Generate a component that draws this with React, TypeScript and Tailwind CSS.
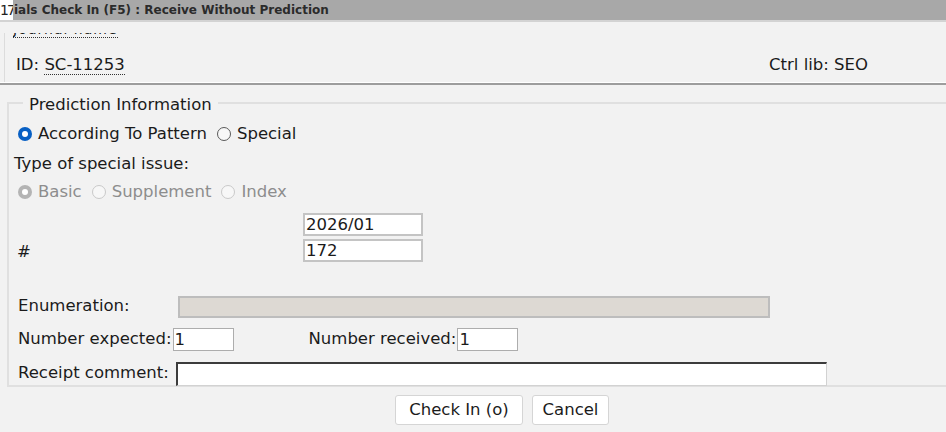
const Radio = ({ checked, disabled }: { checked?: boolean; disabled?: boolean }) => {
  if (checked) {
    return (
      <span
        className={
          'flex h-[14px] w-[14px] shrink-0 items-center justify-center rounded-full ' +
          (disabled ? 'bg-[#b4b4b4]' : 'bg-[#0860c4]')
        }
      >
        <span className="h-[6px] w-[6px] rounded-full bg-white" />
      </span>
    )
  }
  return (
    <span
      className={
        'h-[14px] w-[14px] shrink-0 rounded-full border bg-[#f7f7f7] ' +
        (disabled ? 'border-[#c9c9c9]' : 'border-[#5a5a5a]')
      }
    />
  )
}

const Option = ({ label, checked, disabled }: { label: string; checked?: boolean; disabled?: boolean }) => (
  <label className={'flex items-center gap-[6px] ' + (disabled ? 'text-[#8d8d8d]' : 'text-[#1b1b1b]')}>
    <Radio checked={checked} disabled={disabled} />
    <span>{label}</span>
  </label>
)

const App = () => {
  return (
    <div className="h-[432px] w-[946px] overflow-hidden bg-[#f2f2f2] text-[16.5px] leading-none text-[#1b1b1b] [font-family:'DejaVu_Sans',sans-serif]">
      {/* title bar */}
      <div className="flex h-[22px] items-center border-b-2 border-[#d3d3d3] bg-[#a8a8a8]">
        <span className="h-[20px] w-[13px] shrink-0 overflow-hidden bg-white text-[14px] leading-[21px] tracking-[-2px] text-[#222]">
          17
        </span>
        <span className="pl-[1px] text-[12px] font-bold text-[#2b2b2b]">
          ials Check In (F5) : Receive Without Prediction
        </span>
      </div>

      {/* record header */}
      <div className="pl-[4px] pt-[11px]">
        <div className="flex h-[49px] flex-col border-l border-[#dcdcdc]">
          <div className="ml-[8px] h-[5px] shrink-0 overflow-hidden">
            <span className="-mt-[12px] block w-fit border-b border-dotted border-[#333] text-[14px] leading-[16px] tracking-[1px]">
              Journal name
            </span>
          </div>
          <div className="mt-[19px] flex items-center pl-[11px] pr-[78px]">
            <span>
              ID: <span className="border-b border-dotted border-[#333]">SC-11253</span>
            </span>
            <span className="ml-auto">Ctrl lib: SEO</span>
          </div>
        </div>
      </div>
      <div className="border-t border-white" />
      <div className="border-t-2 border-[#9d9d9d]" />

      {/* prediction fieldset */}
      <fieldset className="ml-[7px] mt-[5px] h-[297px] w-[960px] border-2 border-[#e0e0e0] pl-[8px]">
        <legend className="ml-[6px] px-[6px] pt-[5px] leading-[20px]">Prediction Information</legend>
        <div className="mt-[11px] flex items-center gap-[10px] pl-[1px]">
          <Option label="According To Pattern" checked />
          <Option label="Special" />
        </div>
        <div className="mt-[13px] -ml-[3px]">Type of special issue:</div>
        <div className="mt-[12px] flex items-center gap-[10px] pl-[1px]">
          <Option label="Basic" checked disabled />
          <Option label="Supplement" disabled />
          <Option label="Index" disabled />
        </div>

        <div className="mt-[12px] flex items-end">
          <span className="mb-[1px] w-[286px]">#</span>
          <div className="flex flex-col gap-[3px]">
            <input
              readOnly
              value="2026/01"
              className="h-[23px] w-[120px] border-2 border-[#c4c4c4] bg-white px-[1px] text-[16.5px] outline-none"
            />
            <input
              readOnly
              value="172"
              className="h-[23px] w-[120px] border-2 border-[#c4c4c4] bg-white px-[1px] text-[16.5px] outline-none"
            />
          </div>
        </div>

        <div className="mt-[34px] flex items-center">
          <span className="w-[161px] pl-[1px]">Enumeration:</span>
          <div className="h-[22px] w-[592px] border-2 border-[#bdbdbd] bg-[#ddd9d3]" />
        </div>

        <div className="mt-[10px] flex items-center">
          <span className="mr-[1px] pl-[1px]">Number expected:</span>
          <input
            readOnly
            value="1"
            className="h-[23px] w-[61px] border border-[#adadad] bg-white px-[1px] text-[16.5px] outline-none"
          />
          <span className="ml-[75px] mr-[1px]">Number received:</span>
          <input
            readOnly
            value="1"
            className="h-[23px] w-[61px] border border-[#adadad] bg-white px-[1px] text-[16.5px] outline-none"
          />
        </div>

        <div className="mt-[11px] flex items-center">
          <span className="w-[159px] pl-[1px]">Receipt comment:</span>
          <input
            readOnly
            value=""
            className="h-[24px] w-[651px] border-b border-l-2 border-r border-t-2 border-b-[#d2d2d2] border-l-[#3c3c3c] border-r-[#d2d2d2] border-t-[#3c3c3c] bg-white outline-none"
          />
        </div>
      </fieldset>

      {/* actions */}
      <div className="mt-[8px] flex justify-center gap-[9px] pl-[58px]">
        <button className="h-[30px] w-[128px] rounded-[3px] border border-[#d5d5d5] bg-white text-[16.5px] text-[#1b1b1b]">
          Check In (o)
        </button>
        <button className="h-[30px] w-[77px] rounded-[3px] border border-[#d5d5d5] bg-white text-[16.5px] text-[#1b1b1b]">
          Cancel
        </button>
      </div>
    </div>
  )
}

export default App
